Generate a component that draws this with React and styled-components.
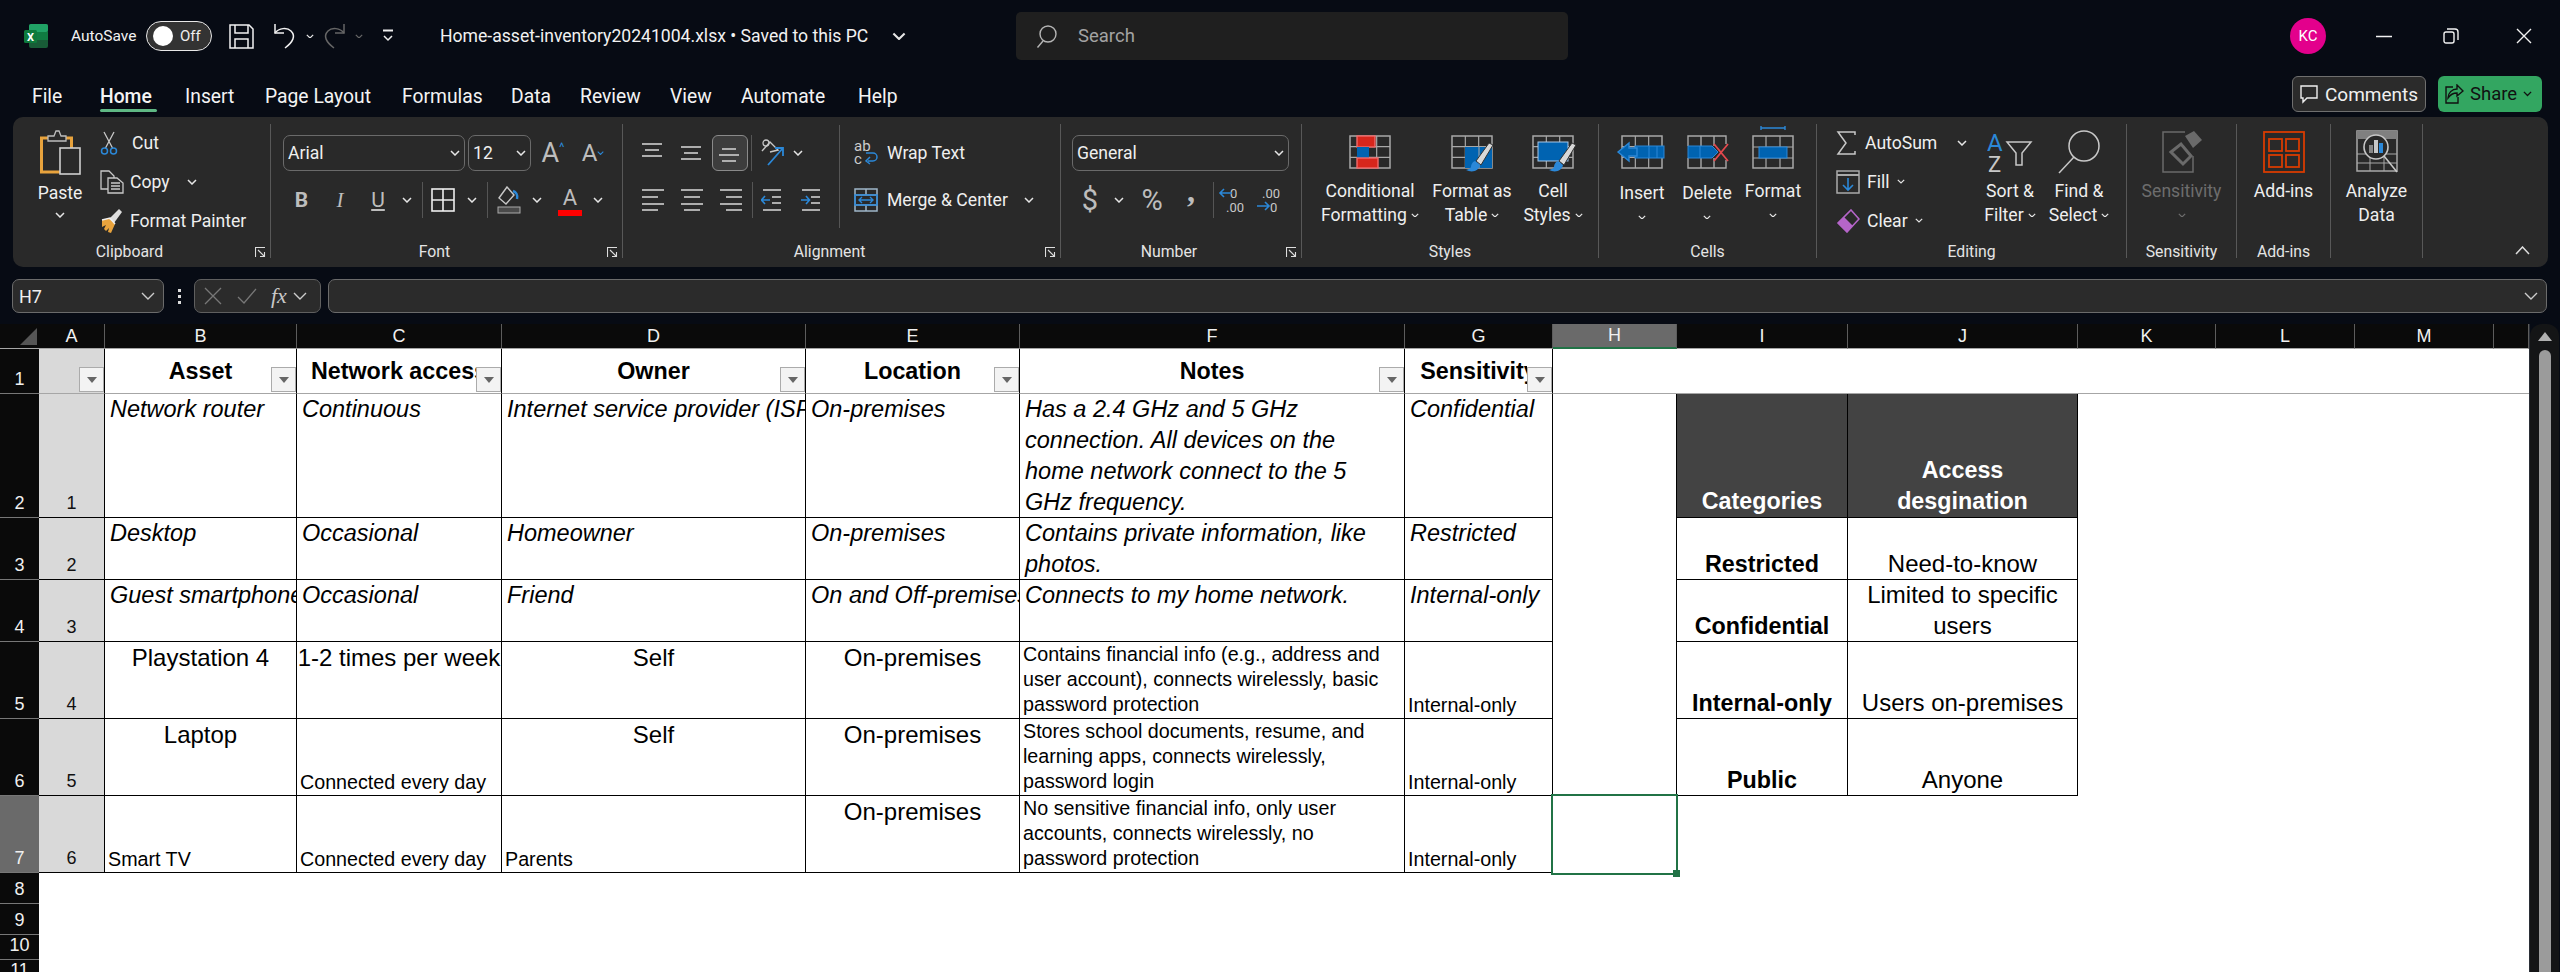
import React from 'react';
import styled, { createGlobalStyle } from 'styled-components';

const Global = createGlobalStyle`
  html, body { margin: 0; padding: 0; background: #070b14; overflow: hidden; }
  * { box-sizing: border-box; }
`;
const UI = `Roboto, "Open Sans", sans-serif`;
const SHEET = `"Liberation Sans", Arial, sans-serif`;

const Page = styled.div`
  width: 2560px; height: 972px; overflow: hidden; display: flex; flex-direction: column;
  background: #070b14; color: #f0f0f0; font-family: ${UI};
`;
const TitleBar = styled.header`
  height: 72px; flex: none; display: flex; align-items: center; padding-left: 24px; position: relative;
`;
const Slot = styled.div`
  width: ${p => p.$w}px; flex: none; display: flex; align-items: center; justify-content: ${p => p.$left ? 'flex-start' : 'center'};
  color: ${p => p.$c || 'inherit'}; font-size: ${p => p.$fs || 17.6}px; ${p => p.$italic ? 'font-style: italic;' : ''}
  ${p => p.$bold ? 'font-weight: 700;' : ''}
`;
const AutoSaveLabel = styled.span`font-size: 15.5px; width: 75px; color: #f2f2f2;`;
const Toggle = styled.div`
  width: 66px; height: 30px; flex: none; border: 1.5px solid #e8e8e8; border-radius: 15px; background: #333;
  display: flex; align-items: center; gap: 7px; padding-left: 6px; font-size: 15px; color: #eee;
`;
const Knob = styled.span`width: 20px; height: 20px; border-radius: 50%; background: #fff; flex: none;`;
const DocTitle = styled.div`
  font-size: 17.6px; color: #f2f2f2; white-space: pre; width: 576px; flex: none; display: flex; align-items: center; gap: 24px;
`;
const SearchBox = styled.div`
  width: 552px; height: 48px; flex: none; background: #1f1f1f; border-radius: 5px; display: flex; align-items: center;
  padding-left: 20px; gap: 20px; color: #a3a3a3; font-size: 18.5px;
`;
const Avatar = styled.div`
  width: 36px; height: 36px; flex: none; border-radius: 50%; background: #e3008c; color: #fff; font-size: 15px;
  display: flex; align-items: center; justify-content: center; margin-left: 722px;
`;
const TabRow = styled.nav`
  height: 45px; flex: none; display: flex; align-items: center; position: relative; font-size: 19.3px; padding-left: 32px;
`;
const Tab = styled.div`
  width: ${p => p.$w}px; flex: none; height: 45px; display: flex; align-items: center; white-space: pre; position: relative;
  padding-bottom: 0; margin-top: 3px; color: #f4f4f4; font-weight: ${p => p.$active ? 500 : 400};
  ${p => p.$active ? `&::after { content: ''; position: absolute; left: 0; top: 35px; width: 57px; height: 3px; background: #5fb884; border-radius: 2px; }` : ''}
`;
const RightActions = styled.div`
  margin-left: auto; margin-right: 18px; display: flex; gap: 12px; align-items: center; padding-bottom: 1px;
`;
const CommentsBtn = styled.div`
  width: 134px; height: 36px; border: 1px solid #6f6f6f; border-radius: 6px; background: #2b2b2b; display: flex; align-items: center;
  gap: 7px; padding-left: 7px; font-size: 19px; color: #f0f0f0;
`;
const ShareBtn = styled.div`
  width: 104px; height: 36px; border-radius: 6px; background: #33a661; display: flex; align-items: center; gap: 6px; padding-left: 6px;
  font-size: 18.5px; color: #111;
`;
const Ribbon = styled.section`
  height: 150px; flex: none; margin: 0 12px 0 13px; background: #292929; border-radius: 10px; padding: 7px 0 9px; display: flex; position: relative;
`;
const Group = styled.div`
  width: ${p => p.$w}px; flex: none; height: 134px; border-right: ${p => p.$noSep ? 'none' : '1px solid #585858'}; display: flex; flex-direction: column; position: relative;
`;
const GroupBody = styled.div`
  height: 113px; flex: none; display: flex; padding-left: ${p => p.$pl || 0}px;
`;
const GroupLabel = styled.div`
  height: 21px; padding-top: 8px; line-height: 13px; text-align: center; font-size: 15.8px; color: #e4e4e4; white-space: pre;
  padding-right: ${p => p.$launch ? 24 : 0}px;
`;
const Launcher = styled.div`position: absolute; right: 4px; bottom: 0;`;
const CollapseBtn = styled.div`position: absolute; right: 18px; bottom: 12px;`;
const PasteBtn = styled.div`
  width: 80px; flex: none; display: flex; flex-direction: column; align-items: center; padding-top: 6px; font-size: 17.6px;
`;
const PasteLabel = styled.div`margin-top: 8px; line-height: 20px; margin-bottom: 9px;`;
const SmallCol = styled.div`
  width: ${p => p.$w}px; flex: none; display: grid; grid-auto-rows: 39px; height: 117px; margin-top: -1px;
`;
const SmallBtn = styled.div`
  display: flex; align-items: center; gap: ${p => p.$gap ?? 8}px; font-size: 17.6px; color: #efefef; white-space: pre;
`;
const Stack = styled.div`display: flex; flex-direction: column; width: ${p => p.$w ? p.$w + 'px' : 'auto'}; flex: none;`;
const ToolRow = styled.div`
  height: ${p => p.$h || 36}px; margin-top: ${p => p.$mt || 0}px; display: flex; align-items: center; flex: none;
`;
const Combo = styled.div`
  width: ${p => p.$w}px; height: 36px; flex: none; border: 1px solid #6a6a6a; border-radius: 7px; display: flex; align-items: center;
  justify-content: space-between; padding: 0 4px; margin-right: ${p => p.$mr || 0}px; font-size: 17.6px; color: #efefef;
`;
const Sep = styled.div`width: 1px; height: ${p => p.$h || 36}px; background: #555; flex: none; margin: 0 ${p => p.$m || 0}px;`;
const TallSep = styled(Sep)`margin-top: 1px;`;
const ActiveBox = styled.div`
  width: 36px; height: 36px; border: 1px solid #8a8a8a; border-radius: 6px; background: #3d3d3d; display: flex; align-items: center; justify-content: center;
`;
const Tall = styled.div`
  width: ${p => p.$w}px; flex: none; display: flex; flex-direction: column; align-items: center; color: ${p => p.$dim ? '#6d6d6d' : '#efefef'};
  font-size: 17.6px; line-height: 24px; white-space: pre; text-align: center;
`;
const TallIcon = styled.div`height: 55px; flex: none; display: flex; align-items: center; justify-content: center; padding-bottom: ${p => p.$pb || 0}px;`;
const TallLine = styled.div`height: 24px; display: flex; align-items: center; gap: 4px; justify-content: center; margin-top: ${p => p.$mt || 0}px;`;
const LetterBtn = styled.span`font-family: ${p => p.$serif ? '"Liberation Serif", serif' : UI}; font-size: ${p => p.$fs || 21}px; color: #bdbdbd;
  ${p => p.$b ? 'font-weight:700;' : ''} ${p => p.$i ? 'font-style:italic;' : ''} ${p => p.$u ? 'text-decoration: underline;' : ''}`;
const CaretMark = styled.sup`font-size: 13px; color: #2b88d8; margin-top: -12px;`;
const CommaGlyph = styled.span`font-family: "Liberation Serif", serif; font-size: 32px; font-weight: 700; color: #bdbdbd; margin-top: -18px;`;
const FormulaBar = styled.div`
  height: 57px; flex: none; display: flex; align-items: flex-start; padding: 12px 13px 0 12px;
`;
const NameBox = styled.div`
  width: 152px; height: 34px; flex: none; border: 1px solid #6b6b6b; border-radius: 7px; background: #2b2b2b; display: flex; align-items: center;
  justify-content: space-between; padding: 0 8px 0 6px; font-size: 18px; color: #f0f0f0;
`;
const Dots = styled.div`
  width: 30px; height: 34px; flex: none; display: flex; flex-direction: column; align-items: center; justify-content: center; gap: 3px;
  & > i { width: 3px; height: 3px; background: #ddd; display: block; }
`;
const FxBox = styled.div`
  width: 127px; height: 34px; flex: none; border: 1px solid #5f5f5f; border-radius: 7px; background: #2b2b2b; display: flex; align-items: center;
  padding-left: 9px; margin-right: 7px;
`;
const FxText = styled.span`font-family: "Liberation Serif", serif; font-style: italic; font-size: 22px; color: #c8c8c8; margin: 0 6px 0 14px;`;
const FormulaInput = styled.div`
  flex: 1; height: 34px; border: 1px solid #6b6b6b; border-radius: 7px; background: #2b2b2b; display: flex; align-items: center; justify-content: flex-end; padding-right: 8px;
`;
const SheetArea = styled.main`flex: 1; display: flex; min-height: 0; font-family: ${SHEET};`;
const Sheet = styled.div`
  width: 2529px; flex: none; background: #fff; display: grid; align-content: start;
  grid-template-columns: 39px 66px 192px 205px 304px 214px 385px 148px 124px 171px 230px 138px 139px 139px 35px;
  grid-template-rows: 25px 45px 124px 62px 62px 77px 77px 77px 31px 31px 25px 25px;
`;
const Scrollbar = styled.aside`
  width: 31px; flex: none; padding: 0 1px 0 0; border-left: 1px solid #2a2e36;
`;
const ScrollTrack = styled.div`
  height: 100%; width: 29px; background: #141516; border-radius: 12px 12px 0 0; display: flex; flex-direction: column; align-items: center; padding-top: 8px; gap: 9px;
`;
const ScrollThumb = styled.div`width: 12px; flex: 1; background: #9b9b9b; border-radius: 6px 6px 0 0;`;
const Corner = styled.div`background: #0a0a0a; border-bottom: 1px solid #a6a6a6; display: flex; align-items: center; justify-content: flex-end; padding-right: 2px;`;
const ColHead = styled.div`
  background: ${p => p.$sel ? '#6a6a6a' : '#0a0a0a'}; border-right: 1px solid #5c5c5c; color: #f0f0f0; font-size: 18px;
  border-bottom: ${p => p.$sel ? '2px solid #217346' : '1px solid #a6a6a6'}; display: flex; align-items: center; justify-content: center;
`;
const RowHead = styled.div`
  background: ${p => p.$sel ? '#6a6a6a' : '#0a0a0a'}; border-bottom: 1px solid #777; color: #f0f0f0; font-size: 18px; line-height: 28px;
  display: flex; align-items: flex-end; justify-content: center; overflow: hidden;
`;
const IndexCell = styled.div`
  background: #d9d9d9; color: #111; font-size: 18px; line-height: 28px; border-right: 1px solid #000; border-bottom: 1px solid ${p => p.$head ? '#a6a6a6' : '#000'};
  display: flex; align-items: flex-end; justify-content: center; position: relative;
`;
const Cell = styled.div`
  position: relative; overflow: hidden; white-space: pre; display: flex; color: ${p => p.$dark ? '#fff' : '#000'};
  background: ${p => p.$dark ? '#434343' : 'transparent'};
  font-size: ${p => p.$small ? 19.7 : p.$b ? 23.3 : p.$i ? 23.5 : 24}px; line-height: ${p => p.$lh || (p.$small ? 25 : 31)}px;
  font-style: ${p => p.$i ? 'italic' : 'normal'}; font-weight: ${p => p.$b ? 700 : 400};
  align-items: ${p => p.$bottom ? 'flex-end' : 'flex-start'};
  justify-content: ${p => p.$center ? 'center' : 'flex-start'}; text-align: ${p => p.$center ? 'center' : 'left'};
  padding-left: ${p => p.$center ? 0 : p.$small ? 3 : 5}px;
  border-right: 1px solid #000; border-bottom: 1px solid #000;
`;
const HeadCell = styled.div`
  position: relative; overflow: hidden; white-space: pre; display: flex; align-items: center; justify-content: center; color: #000;
  font-size: 23.3px; font-weight: 700; line-height: 30px;
  border-right: 1px solid #000; border-bottom: 1px solid #a6a6a6;
`;
const FilterMask = styled.div`position: absolute; right: 0; top: 0; bottom: 0; width: 25px; background: #fff;`;
const FilterBtn = styled.div`
  position: absolute; right: 0; bottom: 1px; width: 25px; height: 25px; background: #f3f3f3; border: 1px solid #ababab; display: flex; align-items: center; justify-content: center;
  &::after { content: ''; width: 0; height: 0; border-left: 5px solid transparent; border-right: 5px solid transparent; border-top: 6px solid #666; }
`;
const HeadFill = styled.div`grid-column: 9 / -1; border-bottom: 1px solid #a6a6a6;`;
const Blank = styled.div`border-right: ${p => p.$rb ? '1px solid #000' : 'none'};`;
const RowFill = styled.div`grid-column: ${p => p.$from || 12} / -1;`;
const SelectedCell = styled.div`
  position: relative;
  &::before { content: ''; position: absolute; left: -2px; top: -2px; right: -1px; bottom: -2px; border: 2px solid #217346; }
`;
const FillHandle = styled.div`position: absolute; right: -3px; bottom: -4px; width: 7px; height: 7px; background: #217346;`;
const ColorBar = styled.span`display: block; width: 24px; height: 6px; background: #f00;`;

const G = '#bdbdbd', B = '#2b88d8';
const Svg = styled.svg`display: block; flex: none;`;
const FlipSvg = styled(Svg)`transform: scaleX(-1);`;

const Chev = ({ c = '#e6e6e6', w = 10 }) => (
  <Svg width={w} height={w * 0.6} viewBox="0 0 10 6"><path d="M1 1l4 4 4-4" fill="none" stroke={c} strokeWidth="1.5" /></Svg>
);
const ExcelLogo = () => (
  <Svg width="24" height="24" viewBox="0 0 24 24">
    <rect x="5" y="0" width="19" height="24" rx="2" fill="#185c37" />
    <rect x="5" y="0" width="19" height="8" rx="2" fill="#21a366" />
    <rect x="14" y="8" width="10" height="8" fill="#107c41" />
    <rect x="5" y="8" width="9" height="8" fill="#107c41" />
    <rect x="0" y="6" width="13" height="13" rx="1.5" fill="#0e7a3c" />
    <text x="6.5" y="16.5" textAnchor="middle" fontSize="11" fontWeight="700" fill="#fff" fontFamily="Roboto">X</text>
  </Svg>
);
const SaveIcon = () => (
  <Svg width="25" height="25" viewBox="0 0 25 25"><g fill="none" stroke="#f2f2f2" strokeWidth="1.5">
    <path d="M1 1h19l4 4v19H1z" /><path d="M6 1v8h13V1M6 24v-9h13v9" /></g></Svg>
);
const UndoPaths = ({ c }) => <g fill="none" stroke={c} strokeWidth="1.5"><path d="M2 1v9h9" /><path d="M2 10c4-5 12-6 16-2 5 5 2 11-6 17" /></g>;
const UndoIcon = () => <Svg width="24" height="26" viewBox="0 0 24 26"><UndoPaths c="#f2f2f2" /></Svg>;
const RedoIcon = () => <FlipSvg width="24" height="26" viewBox="0 0 24 26"><UndoPaths c="#666" /></FlipSvg>;
const Customize = () => (
  <Svg width="12" height="14" viewBox="0 0 12 14"><path d="M1 1.5h10" stroke="#eee" strokeWidth="2" /><path d="M2 7l4 4 4-4" fill="none" stroke="#eee" strokeWidth="1.5" /></Svg>
);
const SearchIcon = () => (
  <Svg width="22" height="24" viewBox="0 0 22 24"><g fill="none" stroke="#b5b5b5" strokeWidth="1.4"><circle cx="12" cy="10" r="8" /><path d="M7 17l-5.500 6.500" /></g></Svg>
);
const MinIcon = () => <Svg width="16" height="3" viewBox="0 0 16 3"><path d="M0 1.500h16" stroke="#f2f2f2" strokeWidth="1.500" /></Svg>;
const RestoreIcon = () => (
  <Svg width="16" height="16" viewBox="0 0 16 16"><g fill="none" stroke="#f2f2f2" strokeWidth="1.400"><rect x="1" y="4" width="10" height="11" rx="2" /><path d="M4 1h8a3 3 0 0 1 3 3v8" /></g></Svg>
);
const CloseIcon = () => <Svg width="16" height="16" viewBox="0 0 16 16"><path d="M1 1l14 14M15 1L1 15" stroke="#f2f2f2" strokeWidth="1.400" /></Svg>;
const CommentIcon = () => (
  <Svg width="18" height="20" viewBox="0 0 18 20"><path d="M1 2h16v12H7l-4 4v-4H1z" fill="none" stroke="#f0f0f0" strokeWidth="1.400" /></Svg>
);
const ShareIcon = () => (
  <Svg width="20" height="20" viewBox="0 0 20 20"><g fill="none" stroke="#111" strokeWidth="1.400"><path d="M13 1l6 6-6 5V9c-4 0-7 2-9 5 0-5 4-9 9-9z" /><path d="M9 3H2v16h12v-6" /></g></Svg>
);
const LauncherIcon = () => (
  <Svg width="11" height="11" viewBox="0 0 11 11"><g fill="none" stroke="#ddd" strokeWidth="1.100"><path d="M.5 10V.5H10" /><path d="M3 3l6 6M5 9.500h4.500V5" /></g></Svg>
);
const CollapseIcon = () => <Svg width="15" height="9" viewBox="0 0 15 9"><path d="M1 8l6.500-7L14 8" fill="none" stroke="#ddd" strokeWidth="1.500" /></Svg>;
const PasteIcon = () => (
  <Svg width="41" height="45" viewBox="0 0 41 45">
    <rect x="1.500" y="8" width="30" height="34" fill="none" stroke="#e8a33d" strokeWidth="3" />
    <path d="M8 11V6h6l2-5 3 0 2 5h5v5z" fill="#292929" stroke="#bdbdbd" strokeWidth="1.300" />
    <rect x="20" y="18" width="20" height="26" fill="#292929" stroke="#cfcfcf" strokeWidth="1.600" />
  </Svg>
);
const CutIcon = () => (
  <Svg width="18" height="24" viewBox="0 0 18 24"><g fill="none"><path d="M4 1l8.500 16M14 1L5.500 17" stroke="#c8c8c8" strokeWidth="1.300" />
    <circle cx="4.500" cy="20" r="3" stroke={B} strokeWidth="1.500" /><circle cx="13.500" cy="20" r="3" stroke={B} strokeWidth="1.500" /></g></Svg>
);
const CopyIcon = () => (
  <Svg width="24" height="24" viewBox="0 0 24 24"><g fill="none" stroke="#c8c8c8" strokeWidth="1.300"><path d="M8 19H1V1h8l5 5v2" /><path d="M8 8h9l6 5v10H8z" /><path d="M11 13h9M11 16h9M11 19h9" /></g></Svg>
);
const PainterIcon = () => (
  <Svg width="24" height="26" viewBox="0 0 24 26"><path d="M2 12l8-2 5 6-4 9-3-1 1-4-3 3-2-2 2-4-4 2z" fill="#e8a33d" /><path d="M9 11l10-10 3 3-8 11z" fill="#ddd" /><path d="M2 12l8-2 5 6" fill="none" stroke="#eee" strokeWidth="1.500" /></Svg>
);
const Lines = ({ rows, w = 22, h = 24, c = G, arrow }) => (
  <Svg width={w} height={h} viewBox={`0 0 ${w} ${h}`}>
    {rows.map(([a, b, y], i) => <path key={i} d={`M${a} ${y}H${b}`} stroke={c} strokeWidth="1.800" />)}
    {arrow === 'l' && <path d="M9 12H1M4 8l-3.500 4L4 16" fill="none" stroke={B} strokeWidth="1.600" />}
    {arrow === 'r' && <path d="M1 12h8M6 8l3.500 4L6 16" fill="none" stroke={B} strokeWidth="1.600" />}
  </Svg>
);
const OrientIcon = () => (
  <Svg width="26" height="28" viewBox="0 0 26 28"><g fill="none"><path d="M2 12l8-9 8 8-8 2" stroke="#c8c8c8" strokeWidth="1.400" /><circle cx="6" cy="4" r="3" stroke="#c8c8c8" strokeWidth="1.300" />
    <path d="M8 26l15-17M15 9h8v8" stroke={B} strokeWidth="1.800" /></g></Svg>
);
const WrapIcon = () => (
  <Svg width="24" height="26" viewBox="0 0 24 26">
    <text x="0" y="11" fontSize="15" fill="#ccc" fontFamily="Roboto">ab</text>
    <text x="0" y="24" fontSize="15" fill="#ccc" fontFamily="Roboto">c</text>
    <path d="M14 21h5a4 4 0 0 0 0-8h-7M16 17l-4 4 4 3" fill="none" stroke={B} strokeWidth="1.500" />
  </Svg>
);
const MergeIcon = () => (
  <Svg width="24" height="24" viewBox="0 0 24 24"><g fill="none"><rect x="1" y="1" width="22" height="22" stroke="#9fb6c9" strokeWidth="1.500" />
    <path d="M1 7h22M1 17h22M12 1v6M12 17v6" stroke="#9fb6c9" strokeWidth="1.500" /><path d="M1 7h22v10H1z" stroke={B} strokeWidth="1.500" />
    <path d="M5 12h14M8 9l-3 3 3 3M16 9l3 3-3 3" stroke={B} strokeWidth="1.400" /></g></Svg>
);
const BordersIcon = () => (
  <Svg width="24" height="24" viewBox="0 0 24 24"><g fill="none" stroke="#eee" strokeWidth="1.600"><rect x="1" y="1" width="22" height="22" /><path d="M12 1v22M1 12h22" /></g></Svg>
);
const FillColorIcon = () => (
  <Svg width="24" height="28" viewBox="0 0 24 28"><g fill="none"><path d="M10 1L2 12l7 6 8-9z" stroke="#c8c8c8" strokeWidth="1.400" /><path d="M16 5c3 1 5 4 4 8" stroke={B} strokeWidth="2.500" />
    <rect x="1" y="21" width="22" height="6" fill="#4a4a4a" stroke="#aaa" /></g></Svg>
);
const FontColorA = () => (
  <Stack>
    <Slot $w={24} $fs={22} $c="#bdbdbd">A</Slot>
    <ColorBar />
  </Stack>
);
const DecIcon = ({ inc }) => (
  <Svg width="32" height="28" viewBox="0 0 32 28">
    <text x={inc ? 6 : 12} y="12" fontSize="13" fill="#c8c8c8" fontFamily="Roboto">{inc ? '.00' : '0'}</text>
    <text x={inc ? 14 : 8} y="26" fontSize="13" fill="#c8c8c8" fontFamily="Roboto">{inc ? '0' : '.00'}</text>
    {inc ? <path d="M1 20h12M9 16l4 4-4 4" fill="none" stroke={B} strokeWidth="1.600" /> : <path d="M14 7H2M6 3L2 7l4 4" fill="none" stroke={B} strokeWidth="1.600" />}
  </Svg>
);
const VisibleSvg = styled(Svg)`overflow: visible;`;
const GridBase = ({ w = 42, h = 34, cols = 3, rows = 3, children }) => {
  const lines = [];
  for (let i = 1; i < cols; i++) lines.push(`M${1 + (i * (w - 2)) / cols} 1v${h - 2}`);
  for (let i = 1; i < rows; i++) lines.push(`M1 ${1 + (i * (h - 2)) / rows}h${w - 2}`);
  return (
    <VisibleSvg width={w} height={h} viewBox={`0 0 ${w} ${h}`}>
      <rect x="1" y="1" width={w - 2} height={h - 2} fill="none" stroke="#a8a8a8" strokeWidth="1.500" />
      <path d={lines.join('')} stroke="#a8a8a8" strokeWidth="1.200" fill="none" />
      {children}
    </VisibleSvg>
  );
};
const Brush = ({ x = 0 }) => (
  <g transform={`translate(${x} 0)`}>
    <path d="M42 10L30 30l-5-4L38 8z" fill="#d8d8d8" stroke="#333" />
    <path d="M24 26c-3 1-4 4-4 6-1 2-3 2-5 3 6 3 13 1 14-5z" fill="#2b88d8" />
  </g>
);
const CFIcon = () => (
  <GridBase>
    <rect x="8" y="1" width="18" height="11" fill="#d7261c" stroke="#f16a6a" strokeWidth="1.400" />
    <rect x="8" y="12" width="12" height="11" fill="#0063b1" />
    <rect x="8" y="23" width="21" height="10" fill="#d7261c" stroke="#f16a6a" strokeWidth="1.400" />
  </GridBase>
);
const TableIcon = () => (
  <GridBase><rect x="14" y="12" width="27" height="21" fill="#0063b1" /><path d="M28 12v21" stroke="#a8a8a8" /><Brush x={0} /></GridBase>
);
const CellStyleIcon = () => (
  <GridBase><rect x="6" y="7" width="30" height="19" fill="#0063b1" stroke="#a8c8e8" /><Brush x={2} /></GridBase>
);
const InsertIcon = () => (
  <GridBase>
    <rect x="14" y="11" width="29" height="12" fill="#0063b1" stroke={B} />
    <path d="M28 11v12M36 11v12" stroke={B} />
    <path d="M-3 17L8 8v5h8v8H8v5z" fill="#0063b1" stroke={B} strokeWidth="1.400" />
  </GridBase>
);
const DeleteIcon = () => (
  <Svg width="44" height="34" viewBox="0 0 44 34"><g fill="none" stroke="#a8a8a8" strokeWidth="1.400"><path d="M3 11V1h38v8M3 23v10h38v-8M16 1v10M29 1v10M16 23v10M29 23v10" /></g>
    <path d="M3 11h24l6 6-6 6H3z" fill="#0063b1" stroke={B} /><path d="M15 11v12" stroke={B} />
    <path d="M29 9l14 17M43 9L29 26" stroke="#e5484d" strokeWidth="1.800" /></Svg>
);
const FormatIcon = () => (
  <Svg width="42" height="43" viewBox="0 0 42 43"><path d="M9 2h24M9 0v4M33 0v4" stroke={B} strokeWidth="1.400" />
    <g transform="translate(0 9)"><rect x="1" y="1" width="40" height="32" fill="none" stroke="#a8a8a8" strokeWidth="1.500" /><path d="M14 1v32M28 1v32M1 12h40M1 23h40" stroke="#a8a8a8" strokeWidth="1.200" /><rect x="7" y="12" width="28" height="11" fill="#0063b1" stroke={B} /></g></Svg>
);
const SigmaIcon = () => <Svg width="20" height="24" viewBox="0 0 20 24"><path d="M19 4V1H2l8 11-8 11h17v-3" fill="none" stroke="#c8c8c8" strokeWidth="1.500" /></Svg>;
const FillIcon = () => (
  <Svg width="24" height="24" viewBox="0 0 24 24"><g fill="none"><rect x="1" y="1" width="22" height="22" stroke="#aaa" strokeWidth="1.500" /><path d="M1 5h22" stroke="#aaa" strokeWidth="2" /><path d="M12 8v12M7 15l5 5 5-5" stroke={B} strokeWidth="1.600" /></g></Svg>
);
const ClearIcon = () => (
  <Svg width="24" height="24" viewBox="0 0 24 24"><path d="M15 1l8 9-12 13-9-9z" fill="none" stroke="#b565c9" strokeWidth="1.600" /><path d="M8 8l9 9-6 6-9-9z" fill="#b565c9" /></Svg>
);
const SortIcon = () => (
  <Svg width="46" height="42" viewBox="0 0 46 42">
    <text x="0" y="20" fontSize="24" fill={B} fontFamily="Roboto">A</text>
    <text x="1" y="41" fontSize="22" fill="#c8c8c8" fontFamily="Roboto">Z</text>
    <path d="M20 11h24l-9 11v12h-6V22z" fill="none" stroke="#c8c8c8" strokeWidth="1.500" />
  </Svg>
);
const FindIcon = () => (
  <Svg width="44" height="44" viewBox="0 0 44 44"><g fill="none" stroke="#c8c8c8" strokeWidth="1.500"><circle cx="27" cy="16" r="15" /><path d="M17 27L2 43" /></g></Svg>
);
const SensIcon = () => (
  <Svg width="42" height="43" viewBox="0 0 42 43"><g fill="none" stroke="#6a6a6a" strokeWidth="1.500"><path d="M24 2H2v40h30V26" /></g>
    <path d="M24 6l9-5 8 9-9 8z" fill="#6a6a6a" /><path d="M10 22l10-8 10 12-8 8z" fill="none" stroke="#6a6a6a" strokeWidth="3" /></Svg>
);
const AddInsIcon = () => (
  <Svg width="42" height="42" viewBox="0 0 42 42"><g fill="none" stroke="#d83b01" strokeWidth="1.800"><rect x="1" y="1" width="40" height="40" /><rect x="6" y="8" width="13" height="12" /><rect x="23" y="8" width="13" height="12" /><rect x="6" y="24" width="13" height="12" /><rect x="23" y="24" width="13" height="12" /></g></Svg>
);
const AnalyzeIcon = () => (
  <Svg width="42" height="43" viewBox="0 0 42 43"><rect x="1" y="1" width="40" height="40" fill="none" stroke="#a8a8a8" strokeWidth="1.500" /><rect x="1" y="1" width="40" height="8" fill="#808080" />
    <path d="M1 24h40M1 33h40M14 24v17M28 24v17" stroke="#a8a8a8" />
    <circle cx="20" cy="17" r="12" fill="#292929" stroke="#c8c8c8" strokeWidth="1.600" />
    <path d="M28 26l13 16" stroke="#c8c8c8" strokeWidth="1.600" />
    <rect x="13" y="15" width="4" height="8" fill="#888" /><rect x="18" y="10" width="4" height="13" fill="#c8c8c8" /><rect x="23" y="13" width="4" height="10" fill={B} />
  </Svg>
);
const Triangle = () => <Svg width="17" height="17" viewBox="0 0 17 17"><path d="M17 0v17H0z" fill="#555" /></Svg>;
const ScrollUp = () => <Svg width="14" height="9" viewBox="0 0 14 9"><path d="M7 0l7 9H0z" fill="#b0b0b0" /></Svg>;
const FormulaChev = ({ c = '#ccc' }) => <Svg width="14" height="8" viewBox="0 0 14 8"><path d="M1 1l6 6 6-6" fill="none" stroke={c} strokeWidth="1.400" /></Svg>;

const tabs = [['File', 68], ['Home', 85], ['Insert', 80], ['Page Layout', 137], ['Formulas', 109], ['Data', 69], ['Review', 90], ['View', 71], ['Automate', 117], ['Help', 50]];

const it = t => ({ t, $i: true });
const top = t => ({ t, $center: true });
const sm = t => ({ t, $small: true, $bottom: true });
const rows = [
  { r: 2, a: '1', h: [it('Network router'), it('Continuous'), it('Internet service provider (ISP)'), it('On-premises'), it('Has a 2.4 GHz and 5 GHz\nconnection. All devices on the\nhome network connect to the 5\nGHz frequency.'), it('Confidential')],
    i: { t: 'Categories', $dark: true, $b: true, $center: true, $bottom: true }, j: { t: 'Access\ndesgination', $dark: true, $b: true, $center: true, $bottom: true } },
  { r: 3, a: '2', h: [it('Desktop'), it('Occasional'), it('Homeowner'), it('On-premises'), it('Contains private information, like\nphotos.'), it('Restricted')],
    i: { t: 'Restricted', $b: true, $center: true, $bottom: true, $lh: 30 }, j: { t: 'Need-to-know', $center: true, $bottom: true, $lh: 30 } },
  { r: 4, a: '3', h: [it('Guest smartphone'), it('Occasional'), it('Friend'), it('On and Off-premises'), it('Connects to my home network.'), it('Internal-only')],
    i: { t: 'Confidential', $b: true, $center: true, $bottom: true, $lh: 30 }, j: { t: 'Limited to specific\nusers', $center: true, $bottom: true, $lh: 31 } },
  { r: 5, a: '4', h: [top('Playstation 4'), top('1-2 times per week'), top('Self'), top('On-premises'), { t: 'Contains financial info (e.g., address and\nuser account), connects wirelessly, basic\npassword protection', $small: true }, sm('Internal-only')],
    i: { t: 'Internal-only', $b: true, $center: true, $bottom: true, $lh: 30 }, j: { t: 'Users on-premises', $center: true, $bottom: true, $lh: 30 } },
  { r: 6, a: '5', h: [top('Laptop'), sm('Connected every day'), top('Self'), top('On-premises'), { t: 'Stores school documents, resume, and\nlearning apps, connects wirelessly,\npassword login', $small: true }, sm('Internal-only')],
    i: { t: 'Public', $b: true, $center: true, $bottom: true, $lh: 30 }, j: { t: 'Anyone', $center: true, $bottom: true, $lh: 30 } },
  { r: 7, a: '6', sel: true, h: [sm('Smart TV'), sm('Connected every day'), sm('Parents'), top('On-premises'), { t: 'No sensitive financial info, only user\naccounts, connects wirelessly, no\npassword protection', $small: true }, sm('Internal-only')] },
];
const heads = ['Asset', 'Network access', 'Owner', 'Location', 'Notes', 'Sensitivity'];
const letters = 'ABCDEFGHIJKLMN'.split('');

const CellText = ({ spec }) => {
  const { t, ...rest } = spec;
  return <Cell {...rest}><span>{t}</span></Cell>;
};

function SheetGrid() {
  return (
    <Sheet>
      <Corner><Triangle /></Corner>
      {letters.map(l => <ColHead key={l} $sel={l === 'H'}>{l === 'N' ? '' : l}</ColHead>)}
      <RowHead>1</RowHead>
      <IndexCell $head><FilterBtn /></IndexCell>
      {heads.map(h => <HeadCell key={h}><span>{h}</span><FilterMask /><FilterBtn /></HeadCell>)}
      <HeadFill />
      {rows.map(row => (
        <React.Fragment key={row.r}>
          <RowHead $sel={row.sel}>{row.r}</RowHead>
          <IndexCell>{row.a}</IndexCell>
          {row.h.map((c, i) => <CellText key={i} spec={c} />)}
          {row.sel ? (
            <>
              <SelectedCell><FillHandle /></SelectedCell>
              <RowFill $from={10} />
            </>
          ) : (
            <>
              <Blank $rb />
              <CellText spec={row.i} />
              <CellText spec={row.j} />
              <RowFill />
            </>
          )}
        </React.Fragment>
      ))}
      {[8, 9, 10, 11].map(n => (
        <React.Fragment key={n}>
          <RowHead>{n}</RowHead>
          <RowFill $from={2} />
        </React.Fragment>
      ))}
    </Sheet>
  );
}

const lineSets = {
  top: [[0, 20, 3], [3, 17, 9], [0, 20, 15]],
  mid: [[0, 20, 6], [3, 17, 12], [0, 20, 18]],
  bot: [[3, 17, 8], [0, 20, 14], [3, 17, 20]],
  left: [[0, 22, 2], [0, 16, 9], [0, 22, 16], [0, 16, 22]],
  center: [[0, 22, 2], [3, 19, 9], [0, 22, 16], [3, 19, 22]],
  right: [[0, 22, 2], [6, 22, 9], [0, 22, 16], [6, 22, 22]],
  indent: [[2, 20, 2], [11, 20, 9], [11, 20, 15], [2, 20, 22]],
};

export default function App() {
  return (
    <Page>
      <Global />
      <TitleBar>
        <Slot $w={47} $left><ExcelLogo /></Slot>
        <AutoSaveLabel>AutoSave</AutoSaveLabel>
        <Toggle><Knob />Off</Toggle>
        <Slot $w={17} />
        <Slot $w={25}><SaveIcon /></Slot>
        <Slot $w={19} />
        <Slot $w={24}><UndoIcon /></Slot>
        <Slot $w={25}><Chev w={8} /></Slot>
        <Slot $w={24}><RedoIcon /></Slot>
        <Slot $w={25}><Chev w={8} c="#666" /></Slot>
        <Slot $w={34}><Customize /></Slot>
        <Slot $w={35} />
        <DocTitle>Home-asset-inventory20241004.xlsx • Saved to this PC<Chev w={14} /></DocTitle>
        <SearchBox><SearchIcon />Search</SearchBox>
        <Avatar>KC</Avatar>
        <Slot $w={50} />
        <Slot $w={16}><MinIcon /></Slot>
        <Slot $w={51} />
        <Slot $w={16}><RestoreIcon /></Slot>
        <Slot $w={57} />
        <Slot $w={16}><CloseIcon /></Slot>
      </TitleBar>
      <TabRow>
        {tabs.map(([t, w]) => <Tab key={t} $w={w} $active={t === 'Home'}>{t}</Tab>)}
        <RightActions>
          <CommentsBtn><CommentIcon />Comments</CommentsBtn>
          <ShareBtn><ShareIcon />Share<Chev w={9} c="#111" /></ShareBtn>
        </RightActions>
      </TabRow>
      <Ribbon>
        <Group $w={258}>
          <GroupBody $pl={7}>
            <PasteBtn><PasteIcon /><PasteLabel>Paste</PasteLabel><Chev /></PasteBtn>
            <SmallCol $w={165}>
              <SmallBtn $gap={14}><Slot $w={18} $left><CutIcon /></Slot>Cut</SmallBtn>
              <SmallBtn $gap={6}><Slot $w={24} $left><CopyIcon /></Slot>Copy<Slot $w={32}><Chev /></Slot></SmallBtn>
              <SmallBtn $gap={6}><Slot $w={24} $left><PainterIcon /></Slot>Format Painter</SmallBtn>
            </SmallCol>
          </GroupBody>
          <GroupLabel $launch>Clipboard</GroupLabel>
          <Launcher><LauncherIcon /></Launcher>
        </Group>

        <Group $w={352}>
          <GroupBody $pl={12}>
            <Stack>
              <ToolRow $mt={11}>
                <Combo $w={182} $mr={3}>Arial<Chev /></Combo>
                <Combo $w={63}>12<Chev /></Combo>
                <Slot $w={44} $fs={27} $c="#bdbdbd">A<CaretMark>^</CaretMark></Slot>
                <Slot $w={36} $fs={24} $c="#bdbdbd">A<Chev w={7} c={B} /></Slot>
              </ToolRow>
              <ToolRow $mt={11}>
                <Slot $w={37}><LetterBtn $b>B</LetterBtn></Slot>
                <Slot $w={40}><LetterBtn $i $serif>I</LetterBtn></Slot>
                <Slot $w={36}><LetterBtn $u>U</LetterBtn></Slot>
                <Slot $w={22}><Chev /></Slot>
                <Slot $w={4} />
                <Sep />
                <Slot $w={40}><BordersIcon /></Slot>
                <Slot $w={18}><Chev /></Slot>
                <Slot $w={6} />
                <Sep />
                <Slot $w={42}><FillColorIcon /></Slot>
                <Slot $w={14}><Chev /></Slot>
                <Slot $w={8} />
                <Slot $w={36}><FontColorA /></Slot>
                <Slot $w={20}><Chev /></Slot>
              </ToolRow>
            </Stack>
          </GroupBody>
          <GroupLabel $launch>Font</GroupLabel>
          <Launcher><LauncherIcon /></Launcher>
        </Group>

        <Group $w={438}>
          <GroupBody $pl={19}>
            <Stack $w={197}>
              <ToolRow $mt={11}>
                <Slot $w={22}><Lines rows={lineSets.top} /></Slot>
                <Slot $w={17} />
                <Slot $w={22}><Lines rows={lineSets.mid} /></Slot>
                <Slot $w={9} />
                <ActiveBox><Lines rows={lineSets.bot} /></ActiveBox>
                <Slot $w={3} />
                <Sep />
                <Slot $w={42}><OrientIcon /></Slot>
                <Slot $w={8}><Chev /></Slot>
              </ToolRow>
              <ToolRow $mt={11}>
                <Slot $w={22}><Lines rows={lineSets.left} /></Slot>
                <Slot $w={17} />
                <Slot $w={22}><Lines rows={lineSets.center} /></Slot>
                <Slot $w={17} />
                <Slot $w={22}><Lines rows={lineSets.right} /></Slot>
                <Slot $w={10} />
                <Sep />
                <Slot $w={8} />
                <Slot $w={22}><Lines rows={lineSets.indent} arrow="l" /></Slot>
                <Slot $w={17} />
                <Slot $w={22}><Lines rows={lineSets.indent} arrow="r" /></Slot>
              </ToolRow>
            </Stack>
            <TallSep $h={103} />
            <Stack $w={200}>
              <ToolRow $mt={11}><Slot $w={14} /><SmallBtn $gap={9}><WrapIcon />Wrap Text</SmallBtn></ToolRow>
              <ToolRow $mt={11}><Slot $w={14} /><SmallBtn $gap={9}><MergeIcon />Merge &amp; Center<Slot $w={24}><Chev /></Slot></SmallBtn></ToolRow>
            </Stack>
          </GroupBody>
          <GroupLabel $launch>Alignment</GroupLabel>
          <Launcher><LauncherIcon /></Launcher>
        </Group>

        <Group $w={241}>
          <GroupBody $pl={11}>
            <Stack>
              <ToolRow $mt={11}><Combo $w={217}>General<Chev /></Combo></ToolRow>
              <ToolRow $mt={11}>
                <Slot $w={36} $fs={29} $c="#bdbdbd">$</Slot>
                <Slot $w={22}><Chev /></Slot>
                <Slot $w={44} $fs={29} $c="#bdbdbd">%</Slot>
                <Slot $w={34}><CommaGlyph>,</CommaGlyph></Slot>
                <Slot $w={5} />
                <Sep />
                <Slot $w={40}><DecIcon /></Slot>
                <Slot $w={36}><DecIcon inc /></Slot>
              </ToolRow>
            </Stack>
          </GroupBody>
          <GroupLabel $launch>Number</GroupLabel>
          <Launcher><LauncherIcon /></Launcher>
        </Group>

        <Group $w={297}>
          <GroupBody $pl={11}>
            <Tall $w={114}><TallIcon><CFIcon /></TallIcon><TallLine>Conditional</TallLine><TallLine>Formatting<Chev w={8} /></TallLine></Tall>
            <Tall $w={90}><TallIcon><TableIcon /></TallIcon><TallLine>Format as</TallLine><TallLine>Table<Chev w={8} /></TallLine></Tall>
            <Tall $w={72}><TallIcon><CellStyleIcon /></TallIcon><TallLine>Cell</TallLine><TallLine>Styles<Chev w={8} /></TallLine></Tall>
          </GroupBody>
          <GroupLabel>Styles</GroupLabel>
        </Group>

        <Group $w={218}>
          <GroupBody $pl={11}>
            <Tall $w={64}><TallIcon><InsertIcon /></TallIcon><TallLine $mt={2}>Insert</TallLine><TallLine><Chev w={8} /></TallLine></Tall>
            <Tall $w={66}><TallIcon><DeleteIcon /></TallIcon><TallLine $mt={2}>Delete</TallLine><TallLine><Chev w={8} /></TallLine></Tall>
            <Tall $w={66}><TallIcon $pb={9}><FormatIcon /></TallIcon><TallLine>Format</TallLine><TallLine><Chev w={8} /></TallLine></Tall>
          </GroupBody>
          <GroupLabel>Cells</GroupLabel>
        </Group>

        <Group $w={310}>
          <GroupBody $pl={19}>
            <SmallCol $w={139}>
              <SmallBtn $gap={9}><SigmaIcon />AutoSum<Slot $w={32}><Chev /></Slot></SmallBtn>
              <SmallBtn $gap={7}><FillIcon />Fill<Chev w={8} /></SmallBtn>
              <SmallBtn $gap={7}><ClearIcon />Clear<Chev w={8} /></SmallBtn>
            </SmallCol>
            <Tall $w={70}><TallIcon><SortIcon /></TallIcon><TallLine>Sort &amp;</TallLine><TallLine>Filter<Chev w={8} /></TallLine></Tall>
            <Tall $w={68}><TallIcon><FindIcon /></TallIcon><TallLine>Find &amp;</TallLine><TallLine>Select<Chev w={8} /></TallLine></Tall>
          </GroupBody>
          <GroupLabel>Editing</GroupLabel>
        </Group>

        <Group $w={110}>
          <GroupBody><Tall $w={109} $dim><TallIcon><SensIcon /></TallIcon><TallLine>Sensitivity</TallLine><TallLine><Chev w={8} c="#6d6d6d" /></TallLine></Tall></GroupBody>
          <GroupLabel>Sensitivity</GroupLabel>
        </Group>
        <Group $w={94}>
          <GroupBody><Tall $w={93}><TallIcon><AddInsIcon /></TallIcon><TallLine>Add-ins</TallLine></Tall></GroupBody>
          <GroupLabel>Add-ins</GroupLabel>
        </Group>
        <Group $w={92}>
          <GroupBody><Tall $w={91}><TallIcon><AnalyzeIcon /></TallIcon><TallLine>Analyze</TallLine><TallLine>Data</TallLine></Tall></GroupBody>
          <GroupLabel> </GroupLabel>
        </Group>
        <CollapseBtn><CollapseIcon /></CollapseBtn>
      </Ribbon>
      <FormulaBar>
        <NameBox>H7<FormulaChev /></NameBox>
        <Dots><i /><i /><i /></Dots>
        <FxBox>
          <Svg width="18" height="18" viewBox="0 0 18 18"><path d="M1 1l16 16M17 1L1 17" stroke="#777" strokeWidth="1.300" /></Svg>
          <Slot $w={15} />
          <Svg width="20" height="16" viewBox="0 0 20 16"><path d="M1 9l6 6L19 1" fill="none" stroke="#777" strokeWidth="1.300" /></Svg>
          <FxText>fx</FxText>
          <FormulaChev />
        </FxBox>
        <FormulaInput><FormulaChev /></FormulaInput>
      </FormulaBar>
      <SheetArea>
        <SheetGrid />
        <Scrollbar><ScrollTrack><ScrollUp /><ScrollThumb /></ScrollTrack></Scrollbar>
      </SheetArea>
    </Page>
  );
}
